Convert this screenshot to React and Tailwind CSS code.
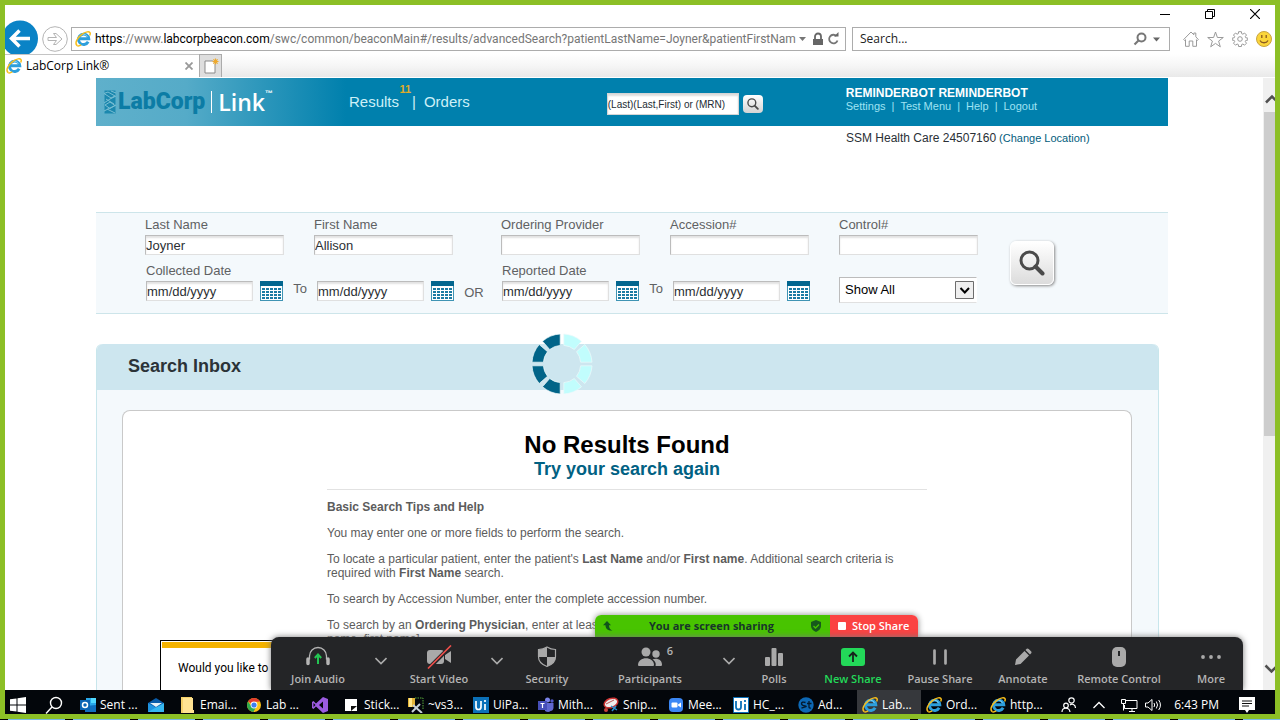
import React from "react";

const UI = "font-['Open_Sans','Noto_Sans',sans-serif]";

function IEIcon({ className }) {
  return (
    <svg viewBox="0 0 16 16" className={className} aria-hidden="true">
      <path d="M13.200 10.800a5.200 5.200 0 1 1 .6-3H4.600" fill="none" stroke="#2d9fdc" strokeWidth="2.900" />
      <path d="M4.400 6.200a4.200 4.200 0 0 1 8-.2" fill="none" stroke="#7fd0f5" strokeWidth="1" />
      <path d="M2.200 14.600C-.6 12.400 2 7 6.500 3.600 10.500.6 14.800-.2 15.200 2.200c.1.800-.1 1.500-.5 2.300" fill="none" stroke="#f6bd1b" strokeWidth="1.500" />
      <path d="M2.200 14.600c1 .6 2.600.1 4-.7" fill="none" stroke="#f6bd1b" strokeWidth="1.500" />
    </svg>
  );
}

function Magnifier({ className, color = "#4a4a4a", width = 3 }) {
  return (
    <svg viewBox="0 0 26 26" className={className} fill="none" stroke={color} strokeWidth={width} aria-hidden="true">
      <circle cx="10.500" cy="10.500" r="8.500" />
      <path d="M16.500 16.500l7 7" strokeWidth={width + 1} strokeLinecap="round" />
    </svg>
  );
}

function BrowserChrome() {
  return (
    <header className={`shrink-0 bg-white text-xs ${UI}`}>
      <div className="flex h-[22px] items-center justify-end gap-[35px] pb-1 pr-[15px]">
        <button aria-label="Minimize" className="h-[10px] w-[10px]">
          <svg viewBox="0 0 10 10" className="h-[10px] w-[10px]"><path d="M0 5.500h10" stroke="#000" /></svg>
        </button>
        <button aria-label="Restore" className="h-[10px] w-[10px]">
          <svg viewBox="0 0 10 10" className="h-[10px] w-[10px]" fill="none" stroke="#000"><path d="M.5 2.500h7v7h-7zM2.500 2.500v-2h7v7h-2" /></svg>
        </button>
        <button aria-label="Close" className="h-[10px] w-[10px]">
          <svg viewBox="0 0 10 10" className="h-[10px] w-[10px]"><path d="M0 0l10 10M10 0L0 10" stroke="#000" strokeWidth="1.200" /></svg>
        </button>
      </div>
      <div className="flex h-[27px] overflow-visible">
        <div className="relative h-[24px] w-[66px] shrink-0">
          <button aria-label="Back" className="absolute -left-[5px] -top-[7px] h-[34px] w-[38px] overflow-hidden">
            <svg viewBox="0 0 38 34" className="h-[34px] w-[38px]">
              <circle cx="20" cy="18.500" r="18" fill="#0a83c6" />
              <path d="M30 18.500H12M19.500 10.500l-8 8 8 8" fill="none" stroke="#fff" strokeWidth="3.500" />
            </svg>
          </button>
          <button aria-label="Forward" className="absolute left-[37px] -top-[1px] h-[26px] w-[26px]">
            <svg viewBox="0 0 26 26" className="h-[26px] w-[26px]" fill="none" stroke="#b4b4b4">
              <circle cx="13" cy="13" r="12.300" />
              <path d="M6 11.500h8.500l-3-4h2.500l6 5.500-6 5.500h-2.500l3-4H6z" />
            </svg>
          </button>
        </div>
        <div className="flex h-[24px] min-w-0 flex-1 items-center overflow-hidden border border-[#acacac] pl-[3px] pr-[1px]">
          <IEIcon className="h-4 w-4 shrink-0" />
          <div className="ml-1 min-w-0 flex-1 overflow-hidden whitespace-nowrap text-xs leading-5 text-[#767676] font-['Roboto','Open_Sans',sans-serif]">
            <span className="text-black">https</span>://www.<span className="text-black">labcorpbeacon.com</span>/swc/common/beaconMain#/results/advancedSearch?patientLastName=Joyner&amp;patientFirstNam
          </div>
          <svg viewBox="0 0 46 16" className="h-4 w-[46px] shrink-0" fill="none" stroke="#767676" aria-hidden="true">
            <path d="M1 6h7l-3.500 4z" fill="#767676" stroke="none" />
            <path d="M15 8h10v6H15z" fill="#666" stroke="none" />
            <path d="M17 8V5.500a3 3 0 0 1 6 0V8" stroke="#666" strokeWidth="1.800" />
            <path d="M38.500 5a4.300 4.300 0 1 0 1 4.500" strokeWidth="1.800" />
            <path d="M36 5.500h4.500V1z" fill="#666" stroke="none" />
          </svg>
        </div>
        <div className="ml-1.5 flex h-[24px] w-[318px] shrink-0 items-center border border-[#acacac] pl-[7px] pr-2">
          <input aria-label="Search the web" defaultValue="Search..." className="min-w-0 flex-1 bg-transparent text-xs text-[#222] outline-none" />
          <svg viewBox="0 0 28 14" className="h-[14px] w-[28px] shrink-0" aria-hidden="true">
            <circle cx="8.500" cy="5.500" r="4" fill="none" stroke="#777" strokeWidth="2" />
            <path d="M5.500 8.500L1.500 12.500" stroke="#777" strokeWidth="2.200" />
            <path d="M20 5.500h7l-3.500 4z" fill="#666" />
          </svg>
        </div>
        <div className="ml-[13px] mr-[3px] flex h-[24px] shrink-0 items-center gap-2 text-[#9a9a9a]">
          <button aria-label="Home" className="h-4 w-4">
            <svg viewBox="0 0 16 16" className="h-4 w-4" fill="none" stroke="currentColor"><path d="M.7 8.500L8 1l2.800 2.800V2h2v3.800l2.500 2.700-1 1-.8-.8v6.600H9.800V10H6.200v5.300H2.500V8.700l-.9.800z" /></svg>
          </button>
          <button aria-label="Favorites" className="h-[17px] w-[17px]">
            <svg viewBox="0 0 17 17" className="h-[17px] w-[17px]" fill="none" stroke="currentColor"><path d="M8.500 1l1.900 5.500h5.900l-4.700 3.600 1.700 5.700-4.800-3.400-4.800 3.400 1.700-5.700L.7 6.500h5.900z" /></svg>
          </button>
          <button aria-label="Tools" className="h-4 w-4">
            <svg viewBox="0 0 16 16" className="h-4 w-4" fill="none" stroke="currentColor">
              <path d="M6.600.7h2.800l.3 2 1.200.5 1.600-1.200 2 2-1.200 1.600.5 1.200 2 .3v2l-2 .3-.5 1.200 1.200 1.600-2 2-1.600-1.200-1.200.5-.3 2H6.600l-.3-2-1.200-.5-1.600 1.200-2-2 1.200-1.600-.5-1.200-2-.3v-2l2-.3.5-1.200L1.500 4l2-2 1.600 1.200 1.200-.5z" />
              <circle cx="8" cy="8" r="2.300" />
            </svg>
          </button>
          <button aria-label="Feedback" className="h-4 w-4">
            <svg viewBox="0 0 16 16" className="h-4 w-4">
              <circle cx="8" cy="8" r="7.500" fill="#fbd53b" stroke="#c9a541" />
              <path d="M5.800 4v3M10.200 4v3M4 9.500c1.500 3 6.500 3 8 0" fill="none" stroke="#8a5a20" strokeWidth="1.300" />
            </svg>
          </button>
        </div>
      </div>
      <div className="flex h-[24px] border-b border-white bg-gradient-to-b from-white via-[#f6f6f6] to-[#e9e9e9]">
        <div className="flex w-[194px] items-center border-t border-[#c4c4c4] bg-white px-[1px]">
          <IEIcon className="h-4 w-4 shrink-0" />
          <span className="ml-1 flex-1 text-xs text-black">LabCorp Link®</span>
          <button aria-label="Close tab" className="mr-[5px] h-2 w-2">
            <svg viewBox="0 0 8 8" className="h-2 w-2"><path d="M.5.5l7 7M7.500.5l-7 7" stroke="#999" strokeWidth="1.800" /></svg>
          </button>
        </div>
        <button aria-label="New tab" className="flex w-[23px] items-center justify-center border border-b-0 border-[#ababab] bg-[#dedede]">
          <svg viewBox="0 0 16 16" className="h-4 w-4">
            <path d="M2 3h10v12H2z" fill="#fff" stroke="#8b8b8b" />
            <circle cx="12.500" cy="3.500" r="2.800" fill="#dedede" />
            <path d="M12.500.5v6M9.500 3.500h6M10.400 1.400l4.200 4.200M14.600 1.400l-4.200 4.200" stroke="#eda92e" strokeWidth="1.200" />
          </svg>
        </button>
      </div>
    </header>
  );
}

function SiteHeader() {
  return (
    <div className="flex h-12 shrink-0 bg-[linear-gradient(to_right,#5fb0cb_0px,#55abc8_90px,#0080ad_250px)] pl-2">
      <div className="flex w-[245px] shrink-0 items-center">
        <svg viewBox="0 0 12 24" className="h-6 w-3" aria-hidden="true">
          <path d="M.5.500h11v23H.5z" fill="#1c88ae" />
          <path d="M0 3.500l4-1.500 7 4-4 2zM2 9l8 5M0 13l6-4 6-3M1 15l5-3 5 3.500-5 3zM0 21l12-6M3 19l8 4M7 1l5 2" fill="none" stroke="#79bed3" strokeWidth="1" />
        </svg>
        <span className="ml-0.5 text-[23px] font-black leading-8 text-[#0c7ca5] font-['Roboto','Liberation_Sans',sans-serif]">LabCorp</span>
        <span className="ml-1.5 h-[22px] w-[1px] bg-white" />
        <span className="ml-1.5 text-[23px] font-semibold leading-8 text-white font-['Open_Sans',sans-serif]">Link</span>
        <span className="self-start pt-2.5 text-[8px] font-bold text-white">™</span>
      </div>
      <nav className="flex items-center text-[15px] text-[#cdf0f8]">
        <a href="#results" className="relative">
          Results
          <span className="absolute -right-3 -top-2 text-[11px] font-bold leading-3 text-[#dfab2b]">11</span>
        </a>
        <span className="ml-[13px] mr-2">|</span>
        <a href="#orders">Orders</a>
      </nav>
      <form className="ml-[137px] flex items-center gap-1 pt-1" onSubmit={(e) => e.preventDefault()}>
        <input aria-label="Patient search" defaultValue="(Last)(Last,First) or (MRN)" className="h-[22px] w-[132px] border border-[#d5d5d5] bg-white text-[10px] text-[#222b33] shadow-[inset_0_2px_2px_#ddd] outline-none" />
        <button aria-label="Search patient" className="flex h-[18px] w-5 items-center justify-center rounded-sm bg-gradient-to-b from-white to-[#d4d4d4]">
          <Magnifier className="h-3 w-3" width={3} />
        </button>
      </form>
      <div className="ml-[83px] pt-2 text-[11px] text-[#9fe3f3]">
        <div className="text-xs font-bold leading-[14px] text-white">REMINDERBOT REMINDERBOT</div>
        <div className="flex gap-1.5 leading-[13px]">
          <a href="#settings">Settings</a><span>|</span>
          <a href="#test">Test Menu</a><span>|</span>
          <a href="#help">Help</a><span>|</span>
          <a href="#logout">Logout</a>
        </div>
      </div>
    </div>
  );
}

const FIELD =
  "block h-5 border border-l-[#bcbcbc] border-t-[#bcbcbc] border-r-[#e0e0e0] border-b-[#e0e0e0] bg-white text-[13px] leading-4 text-[#2b2f33] shadow-[inset_0_2px_2px_#e2e2e2] outline-none";

function TextField({ id, label, value = "" }) {
  return (
    <div className="w-[139px]">
      <label htmlFor={id} className="mb-0.5 block leading-4">{label}</label>
      <input id={id} defaultValue={value} className={`${FIELD} w-full`} />
    </div>
  );
}

function Calendar() {
  return (
    <button type="button" aria-label="Pick a date" className="h-5 w-[23px] shrink-0">
      <svg viewBox="0 0 23 20" className="h-5 w-[23px]" shapeRendering="crispEdges">
        <path d="M.5.5h22v19H.5z" fill="#fff" stroke="#3f94b4" />
        <path d="M0 0h23v5H0z" fill="#02668f" />
        {[7, 10, 13, 16].map((y) =>
          [2, 6, 10, 14, 18].map((x) => <rect key={x + "-" + y} x={x} y={y} width="3" height="2" fill="#1b7ba3" />)
        )}
      </svg>
    </button>
  );
}

function DateRange({ id, label }) {
  return (
    <div className="w-[308px]">
      <label htmlFor={id} className="mb-0.5 block leading-4">{label}</label>
      <div className="flex items-center gap-[7px]">
        <input id={id} defaultValue="mm/dd/yyyy" className={`${FIELD} w-[107px]`} />
        <Calendar />
        <span className="w-5 pb-1 text-center leading-4">To</span>
        <input aria-label={`${label} to`} defaultValue="mm/dd/yyyy" className={`${FIELD} w-[107px]`} />
        <Calendar />
      </div>
    </div>
  );
}

function SearchPanel() {
  return (
    <form className="mt-[66px] flex shrink-0 items-center border-y border-[#cde5ea] bg-[#f4f9fc] pb-3 pl-[49px] pt-1 text-[13px] text-[#5f6163]" onSubmit={(e) => e.preventDefault()}>
      <div className="flex flex-col gap-2">
        <div className="flex gap-12">
          <div className="flex gap-[30px]">
            <TextField id="last" label="Last Name" value="Joyner" />
            <TextField id="first" label="First Name" value="Allison" />
          </div>
          <div className="flex gap-[30px]">
            <TextField id="provider" label="Ordering Provider" />
            <TextField id="accession" label="Accession#" />
            <TextField id="control" label="Control#" />
          </div>
        </div>
        <div className="flex items-end pl-[1px]">
          <DateRange id="collected" label="Collected Date" />
          <span className="w-12 pr-2 text-center leading-4">OR</span>
          <DateRange id="reported" label="Reported Date" />
          <div className="relative -mb-0.5 ml-[29px] w-[138px]">
            <select aria-label="Result filter" className="block h-[26px] w-full appearance-none border border-b-[#e0e0e0] border-l-[#bcbcbc] border-r-white border-t-[#bcbcbc] bg-white pl-[5px] text-[13px] text-black outline-none">
              <option>Show All</option>
            </select>
            <svg viewBox="0 0 19 18" className="pointer-events-none absolute right-[3px] top-1 h-[18px] w-[19px]" aria-hidden="true">
              <path d="M.5.5h18v17H.5z" fill="#efefef" stroke="#6d6d6d" />
              <path d="M5.500 7l4.300 4.500L14 7" fill="none" stroke="#000" strokeWidth="2" />
            </svg>
          </div>
        </div>
      </div>
      <button aria-label="Search" className="ml-8 mt-2 flex h-11 w-11 items-center justify-center rounded-md border border-white bg-gradient-to-b from-white to-[#dcdcdc] shadow-[1px_1px_3px_#888]">
        <Magnifier className="h-[26px] w-[26px]" />
      </button>
    </form>
  );
}

function Spinner() {
  const right = "M1.800-30A30 30 0 0 1 19.500-22.800L12.300-14.500A18.500 18.500 0 0 0 1.800-18.600z";
  const left = "M-1.800-30A30 30 0 0 0-19.500-22.800L-12.300-14.500A18.500 18.500 0 0 1-1.800-18.600z";
  return (
    <svg viewBox="-31 -31 62 62" className="absolute left-[40.9%] -top-[11px] h-[62px] w-[62px]" role="img" aria-label="Loading">
      {[0, 1, 2, 3, 4, 5, 6, 7].map((i) => (
        <path key={i} d={i % 2 ? left : right} transform={`rotate(${Math.ceil(i / 2) * 90})`} fill={i < 4 ? "#c1fdfd" : "#016488"} stroke="#eef9fb" strokeWidth=".7" />
      ))}
    </svg>
  );
}

function Results() {
  return (
    <section className="relative mr-[9px] mt-[30px] flex flex-1 flex-col rounded-t-md border-x border-[#c8e6ec] bg-[#f4f9fc]">
      <h2 className="h-[46px] shrink-0 rounded-t-md bg-[#cde6ef] pl-[31px] pt-2.5 text-lg font-bold leading-6 text-[#2b3338]">Search Inbox</h2>
      <Spinner />
      <div className="ml-[25px] mr-[26px] mt-5 flex flex-1 flex-col items-center rounded-t-lg border border-b-0 border-[#c9c9c9] bg-white pt-5">
        <h1 className="text-2xl font-bold leading-7 text-black">No Results Found</h1>
        <p className="text-lg font-bold leading-5 text-[#016183]">Try your search again</p>
        <div className="mt-2.5 flex w-[600px] flex-col gap-3 border-t border-[#e2e2e2] pt-2.5 text-xs leading-[14px] text-[#5c5c5c]">
          <p className="font-bold">Basic Search Tips and Help</p>
          <p>You may enter one or more fields to perform the search.</p>
          <p>To locate a particular patient, enter the patient's <b>Last Name</b> and/or <b>First name</b>. Additional search criteria is required with <b>First Name</b> search.</p>
          <p>To search by Accession Number, enter the complete accession number.</p>
          <p>To search by an <b>Ordering Physician</b>, enter at least the first letters of the name [last<br />name, first name]</p>
        </div>
      </div>
    </section>
  );
}

function Scrollbar() {
  return (
    <div className="flex w-3 shrink-0 flex-col overflow-hidden bg-[#f0f0f0]" aria-hidden="true">
      <svg viewBox="0 0 12 34" className="h-[34px] w-3 shrink-0"><path d="M3 24.500L9 18.500l6 6" fill="none" stroke="#505050" strokeWidth="2.500" /></svg>
      <div className="ml-[1px] h-[53%] shrink-0 bg-[#cdcdcd]" />
      <div className="flex-1" />
      <svg viewBox="0 0 12 34" className="h-[34px] w-3 shrink-0"><path d="M2.500 9.500L8.500 15.500l6-6" fill="none" stroke="#505050" strokeWidth="2.500" /></svg>
    </div>
  );
}

function Tool({ width, label, children, green }) {
  return (
    <button className={`flex ${width} shrink-0 flex-col items-center ${green ? "text-[#23d959]" : "text-[#b4b4b4]"}`}>
      <span className="relative flex h-6 shrink-0 items-center justify-center">{children}</span>
      <span className="mt-0.5 whitespace-nowrap leading-4">{label}</span>
    </button>
  );
}

function Caret({ width, label }) {
  return (
    <button aria-label={label} className={`flex ${width} shrink-0 justify-center pt-3`}>
      <svg viewBox="0 0 12 8" className="h-2 w-3"><path d="M.5 1L6 6.500 11.500 1" fill="none" stroke="#a9a9a9" strokeWidth="1.600" /></svg>
    </button>
  );
}

function MeetingOverlay() {
  return (
    <div className={`absolute bottom-0 left-[266px] right-[32px] text-[11px] font-semibold ${UI}`}>
      <div className="ml-[324px] flex h-[22px] w-[323px] overflow-hidden rounded-t-md shadow-[0_0_6px_#888]">
        <div className="flex flex-1 items-center bg-[#48c400] px-2 text-[#17352a]">
          <svg viewBox="0 0 10 10" className="h-2.5 w-2.5" fill="#10541b"><path d="M4 0L0 4.200h2.500C2.500 8 5.500 10 9.500 9.500 7 8.500 6 7 6 4.200h2z" /></svg>
          <span className="flex-1 text-center font-bold">You are screen sharing</span>
          <svg viewBox="0 0 12 12" className="h-3 w-3"><path d="M6 0l5 2v4c0 3-2.500 5-5 6-2.500-1-5-3-5-6V2z" fill="#17591c" /><path d="M3.500 6l2 2 3.500-3.500" fill="none" stroke="#48c400" strokeWidth="1.300" /></svg>
        </div>
        <button className="flex w-[88px] items-center gap-1.5 bg-[#fb4242] pl-2 text-white">
          <span className="h-2 w-2 rounded-[1px] bg-white" />Stop Share
        </button>
      </div>
      <div className="relative flex h-[53px] overflow-hidden rounded-t-lg bg-[#242527] pt-2 shadow-[0_0_6px_#777]">
        <Tool width="w-[94px]" label="Join Audio">
          <svg viewBox="0 0 24 24" className="h-6 w-6" fill="none" stroke="currentColor">
            <path d="M3.500 14.500V11a8.500 8.500 0 0 1 17 0v3.500" strokeWidth="1.300" />
            <path d="M2 14v4.500M22 14v4.500" strokeWidth="3.500" strokeLinecap="round" />
            <path d="M12 19v-9M8.800 13L12 9.500l3.200 3.500" stroke="#23c552" strokeWidth="2" />
          </svg>
        </Tool>
        <Caret width="w-8" label="Audio options" />
        <Tool width="w-[84px]" label="Start Video">
          <svg viewBox="0 0 26 24" className="h-6 w-[26px]">
            <rect x="1" y="5" width="17" height="14" rx="3" fill="#a9a9a9" /><path d="M19 10l6-4v12l-6-4z" fill="#a9a9a9" />
            <path d="M3 23L25 1" stroke="#242527" strokeWidth="4" /><path d="M2 23.500L25 .5" stroke="#f0504c" strokeWidth="1.600" />
          </svg>
        </Tool>
        <Caret width="w-8" label="Video options" />
        <Tool width="w-[68px]" label="Security">
          <svg viewBox="0 0 20 22" className="h-[22px] w-5">
            <path d="M10 1c3 2 6 2.500 8.500 2.500V11c0 5-4.500 8-8.500 9.500C6 19 1.500 16 1.500 11V3.500C4 3.500 7 3 10 1z" fill="#242527" stroke="#a9a9a9" strokeWidth="1.200" />
            <path d="M10 1v10H1.500V3.500C4 3.500 7 3 10 1zM10 11h8.500c0 5-4.500 8-8.500 9.500z" fill="#a9a9a9" />
          </svg>
        </Tool>
        <Tool width="w-[138px]" label="Participants">
          <svg viewBox="0 0 26 20" className="h-5 w-[26px]" fill="#a9a9a9">
            <circle cx="9" cy="5" r="4.500" /><path d="M1 18c0-9 16-9 16 0q0 1-1 1H2q-1 0-1-1z" />
            <circle cx="19" cy="7" r="3.700" /><path d="M18.500 19c1-3-1-5.500-3-6.500 4-2 9.500 0 9.500 5 0 1-.5 1.500-1.500 1.500z" />
          </svg>
          <span className="absolute -right-2.5 -top-0.5 text-[11px] leading-4">6</span>
        </Tool>
        <Caret width="w-5" label="Participant options" />
        <Tool width="w-[70px]" label="Polls">
          <svg viewBox="0 0 18 18" className="h-[18px] w-[18px]" fill="#a9a9a9"><rect y="9" width="5" height="9" rx="1" /><rect x="6.500" width="5" height="18" rx="1" /><rect x="13" y="5" width="5" height="13" rx="1" /></svg>
        </Tool>
        <Tool width="w-[88px]" label="New Share" green>
          <svg viewBox="0 0 24 18" className="h-[18px] w-6"><rect width="24" height="18" rx="3" fill="#23d959" /><path d="M12 14V5M8 8.500L12 4.500l4 4" fill="none" stroke="#17251c" strokeWidth="1.800" /></svg>
        </Tool>
        <Tool width="w-[86px]" label="Pause Share">
          <svg viewBox="0 0 16 16" className="h-4 w-4"><path d="M2.500 1.500v13M13.500 1.500v13" stroke="#a9a9a9" strokeWidth="2.700" strokeLinecap="round" /></svg>
        </Tool>
        <Tool width="w-20" label="Annotate">
          <svg viewBox="0 0 18 18" className="h-[18px] w-[18px]" fill="#a9a9a9"><path d="M1 17l1-5.500L10.500 3 15 7.500 6.500 16zM11.500 2l1.200-1.200q1-.7 2 .2l2.300 2.300q.9 1 .2 2L16 6.500z" /></svg>
        </Tool>
        <Tool width="w-28" label="Remote Control">
          <svg viewBox="0 0 14 20" className="h-5 w-[14px]"><rect width="14" height="20" rx="5" fill="#a9a9a9" /><rect x="6" y="4" width="2" height="5" fill="#242527" /></svg>
        </Tool>
        <Tool width="w-[72px]" label="More">
          <svg viewBox="0 0 20 4" className="h-1 w-5" fill="#a9a9a9"><circle cx="2" cy="2" r="1.900" /><circle cx="10" cy="2" r="1.900" /><circle cx="18" cy="2" r="1.900" /></svg>
        </Tool>
      </div>
    </div>
  );
}

const G = {
  outlook: <><path d="M6 1h10v13H6z" fill="#28a8ea" /><path d="M11 1h5v5h-5z" fill="#50d9ff" /><path d="M5 9l11-1v7H5z" fill="#1070bf" /><path d="M0 3h10v10H0z" fill="#0a64b5" /><circle cx="5" cy="8" r="2.500" fill="none" stroke="#fff" strokeWidth="1.500" /></>,
  mail: <><path d="M0 6l8-5 8 5v9H0z" fill="#0a5ba8" /><path d="M2 6h12L8 10z" fill="#e8f2f8" /><path d="M0 6l16 9H0z" fill="#1f93e0" /><path d="M16 6L0 15h16z" fill="#35b7f1" /></>,
  folder: <><path d="M1 0h11v16H1z" fill="#f5d16b" /><path d="M3 1h10v12h1v3H3z" fill="#ffe393" /></>,
  chrome: <><circle cx="8" cy="8" r="7" fill="#fbc116" /><path d="M8 8L2 4.500a7 7 0 0 1 12 0L8 5z" fill="#e33b2e" /><path d="M8 8L5.500 9.500 2 4.500A7 7 0 0 0 7.500 15L10 10z" fill="#2da94f" /><circle cx="8" cy="8" r="3.400" fill="#fff" /><circle cx="8" cy="8" r="2.600" fill="#3d7ff0" /></>,
  vs: <><path d="M11 0l5 2v12l-5 2L4 9.500 1.500 12 0 11V5l1.500-1L4 6.500z" fill="#9b5be0" /><path d="M11 4.500v7L7 8zM1.500 6v4l2-2z" fill="#05070c" /></>,
  sticky: <><path d="M1 2h12v12H1z" fill="#fff" /><path d="M7 14V9h6z" fill="#111" /></>,
  vs3: <><path d="M7 1h8v11" fill="none" stroke="#58a83c" strokeDasharray="1.500 1" /><path d="M0 1h7v9H0z" fill="#e3b437" /><path d="M1 1h3v9H1z" fill="#ffe68a" /><path d="M4 15l8-8M5 8l9 8" stroke="#c8d2da" strokeWidth="2" /></>,
  ui: <><path d="M0 0h16v16H0z" fill="#0b70b8" /><path d="M3 4v6q0 2.500 2.500 2.500T8 10V4M12 7v6M12 3v2" fill="none" stroke="#fff" strokeWidth="1.700" /></>,
  uiWhite: <><path d="M.5.5h15v15H.5z" fill="#fff" stroke="#0b70b8" /><path d="M3 4v6q0 2.500 2.500 2.500T8 10V4M12 7v6M12 3v2" fill="none" stroke="#0b70b8" strokeWidth="1.800" /></>,
  teams: <><circle cx="9.500" cy="3" r="2.500" fill="#7b83eb" /><circle cx="14" cy="4" r="1.700" fill="#5059c9" /><path d="M7 6h8.500v5q-.5 3-3 3-2 2-5.500 0z" fill="#6068d0" /><path d="M0 4h9v9H0z" fill="#464eb8" /><path d="M2.500 6.500h4M4.500 6.500V11" stroke="#fff" strokeWidth="1.200" /></>,
  snip: <><ellipse cx="8" cy="6" rx="7" ry="4.500" fill="#eee" stroke="#c33" strokeWidth="1.500" transform="rotate(-20 8 6)" /><path d="M3 7l8-4" stroke="#b55" /><path d="M8 9l6 4M13 9l-4 5" stroke="#2c8fd0" strokeWidth="1.500" /><circle cx="3" cy="13" r="2" fill="#c9443c" /></>,
  zoom: <><rect x="1" y="1" width="14" height="14" rx="4" fill="#3b87f5" /><rect x="3.500" y="5.500" width="6" height="5" rx="1" fill="#fff" /><path d="M10 7.500l3-2v5l-3-2z" fill="#fff" /></>,
  st: <><circle cx="8" cy="8" r="7.700" fill="#0d68b5" /><path d="M7.500 5.500Q3.500 4.500 3.500 6.500T7 9t-3.500 2M11 4v6q.3 1.500 2 1M9 6.500h4.500" fill="none" stroke="#04192e" strokeWidth="1.300" /></>,
};

const TASKS = [
  ["Sent ...", "outlook", "w-[68px]"], ["", "mail", "w-[32px]"], ["Emai...", "folder", "w-[66px]"], ["Lab ...", "chrome", "w-[66px]"],
  ["", "vs", "w-[32px]"], ["Stick...", "sticky", "w-[64px]"], ["~vs3...", "vs3", "w-[65px]"], ["UiPa...", "ui", "w-[65px]"], ["Mith...", "teams", "w-[65px]"],
  ["Snip...", "snip", "w-[65px]"], ["Mee...", "zoom", "w-[65px]"], ["HC_...", "uiWhite", "w-[65px]"], ["Ad...", "st", "w-[60px]"],
  ["Lab...", "ie", "w-[64px]", true], ["Ord...", "ie", "w-[64px]"], ["http...", "ie", "w-[64px]"],
];

function Taskbar() {
  return (
    <footer className={`flex h-6 shrink-0 items-stretch bg-[#03060b] text-xs text-white ${UI}`}>
      <button aria-label="Start" className="flex w-9 shrink-0 items-center pl-[5px] pt-1.5">
        <svg viewBox="0 0 16 16" className="h-4 w-4" fill="#fff"><path d="M0 2.300l6.500-.9v6.100H0zM7.500 1.200L16 0v7.500H7.500zM0 8.500h6.500v6.100L0 13.700zM7.500 8.500H16V16l-8.500-1.200z" /></svg>
      </button>
      <button aria-label="Search Windows" className="flex w-[38px] shrink-0 items-center pl-1 pt-1.5">
        <svg viewBox="0 0 18 18" className="h-[18px] w-[18px]" fill="none" stroke="#fff" strokeWidth="1.400"><circle cx="11" cy="7" r="5.500" /><path d="M7 11l-6 6.500" /></svg>
      </button>
      {TASKS.map(([label, icon, width, active], i) => {
        const ie = icon === "ie";
        return (
          <button key={i} aria-label={label || icon} className={`flex ${width} shrink-0 items-center overflow-hidden whitespace-nowrap pt-1.5 ${ie ? "pl-[5px]" : "pl-[1px]"} ${active ? "bg-[#36383c]" : ""}`}>
            {ie ? <IEIcon className="h-4 w-4 shrink-0" /> : <svg viewBox="0 0 16 16" className="h-4 w-4 shrink-0">{G[icon]}</svg>}
            <span className="ml-1 leading-4">{label}</span>
          </button>
        );
      })}
      <div className="ml-auto flex items-center pr-5 pt-1.5">
        <svg viewBox="0 0 16 16" className="h-4 w-4" fill="none" stroke="#fff" strokeWidth="1.200"><circle cx="10.500" cy="3.500" r="2.700" /><circle cx="5" cy="8.500" r="2.300" /><path d="M1 15c0-5 7.500-5 8 0M9 8c2-2 5.500-.5 5.500 3" /></svg>
        <svg viewBox="0 0 12 8" className="mx-4 h-2 w-3"><path d="M.5 7L6 1.500 11.500 7" fill="none" stroke="#fff" strokeWidth="1.300" /></svg>
        <svg viewBox="0 0 17 14" className="h-[14px] w-[17px]" fill="none" stroke="#fff"><path d="M5 2.500h11v8H3.500V7M8 13.500h6M11 10.500v3M.5 1.500h4v4h-4zM2.500 5.500v7" /></svg>
        <svg viewBox="0 0 17 14" className="ml-[7px] h-[14px] w-[17px]" fill="none" stroke="#fff"><path d="M.5 5h2.500l4-3.500v11L3 9H.5zM9 5q1.300 2 0 4M11.300 3.500q2.500 3.500 0 7M13.700 2q3.500 5 0 10" /></svg>
        <span className="ml-3 whitespace-nowrap leading-4">6:43 PM</span>
        <svg viewBox="0 0 16 16" className="ml-5 h-4 w-4"><path d="M0 0h16v13H10l-2 3-2-3H0z" fill="#fff" /><path d="M3 4h10M3 6.500h10M3 9h7" stroke="#111" /></svg>
      </div>
    </footer>
  );
}

export default function App() {
  return (
    <div className="flex h-screen flex-col overflow-hidden bg-black font-['Liberation_Sans',Arial,sans-serif]">
      <div className="flex min-h-0 flex-1 flex-col overflow-hidden border-[5px] border-[#8cbf26] bg-white">
        <BrowserChrome />
        <div className="relative flex min-h-0 flex-1 overflow-hidden">
          <main className="flex min-w-0 flex-1 flex-col overflow-hidden pl-[91px] pr-[95px]">
            <SiteHeader />
            <div className="flex items-center gap-[3px] pl-[750px] pt-1 text-xs leading-4 text-[#2a3036]">
              <span>SSM Health Care 24507160</span>
              <a href="#location" className="text-[11px] text-[#015c7c]">(Change Location)</a>
            </div>
            <SearchPanel />
            <Results />
          </main>
          <Scrollbar />
          <div className="absolute bottom-0 left-[155px] h-[50px] w-[300px] border border-b-0 border-black bg-white p-[1px] text-xs text-black font-['Roboto','Open_Sans',sans-serif]">
            <div className="h-1.5 bg-[#f3b200]" />
            <p className="pl-4 pt-3 leading-4">Would you like to</p>
          </div>
          <MeetingOverlay />
        </div>
        <Taskbar />
      </div>
      <div className="h-[1px] shrink-0 bg-[repeating-linear-gradient(to_right,#000_0px,#000_8px,#76b9e8_8px,#76b9e8_65px)]" />
    </div>
  );
}
